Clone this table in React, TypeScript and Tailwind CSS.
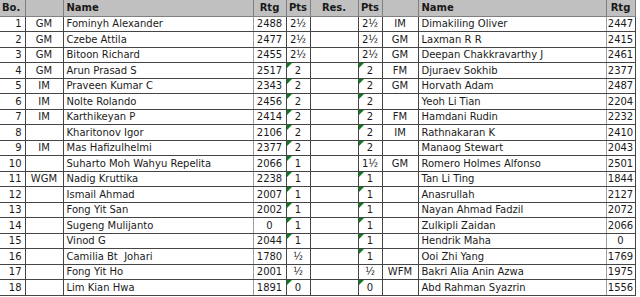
import type { ReactNode } from 'react'

type Row = {
  no: number
  t1: string
  n1: string
  r1: string
  p1: string
  m1: boolean
  p2: string
  m2: boolean
  t2: string
  n2: string
  r2: string
}

const rows: Row[] = [
  { no: 1, t1: 'GM', n1: 'Fominyh Alexander', r1: '2488', p1: '2½', m1: false, p2: '2½', m2: false, t2: 'IM', n2: 'Dimakiling Oliver', r2: '2447' },
  { no: 2, t1: 'GM', n1: 'Czebe Attila', r1: '2477', p1: '2½', m1: false, p2: '2½', m2: false, t2: 'GM', n2: 'Laxman R R', r2: '2415' },
  { no: 3, t1: 'GM', n1: 'Bitoon Richard', r1: '2455', p1: '2½', m1: false, p2: '2½', m2: false, t2: 'GM', n2: 'Deepan Chakkravarthy J', r2: '2461' },
  { no: 4, t1: 'GM', n1: 'Arun Prasad S', r1: '2517', p1: '2', m1: true, p2: '2', m2: true, t2: 'FM', n2: 'Djuraev Sokhib', r2: '2377' },
  { no: 5, t1: 'IM', n1: 'Praveen Kumar C', r1: '2343', p1: '2', m1: true, p2: '2', m2: true, t2: 'GM', n2: 'Horvath Adam', r2: '2487' },
  { no: 6, t1: 'IM', n1: 'Nolte Rolando', r1: '2456', p1: '2', m1: true, p2: '2', m2: true, t2: '', n2: 'Yeoh Li Tian', r2: '2204' },
  { no: 7, t1: 'IM', n1: 'Karthikeyan P', r1: '2414', p1: '2', m1: true, p2: '2', m2: true, t2: 'FM', n2: 'Hamdani Rudin', r2: '2232' },
  { no: 8, t1: '', n1: 'Kharitonov Igor', r1: '2106', p1: '2', m1: true, p2: '2', m2: true, t2: 'IM', n2: 'Rathnakaran K', r2: '2410' },
  { no: 9, t1: 'IM', n1: 'Mas Hafizulhelmi', r1: '2377', p1: '2', m1: true, p2: '2', m2: true, t2: '', n2: 'Manaog Stewart', r2: '2043' },
  { no: 10, t1: '', n1: 'Suharto Moh Wahyu Repelita', r1: '2066', p1: '1', m1: true, p2: '1½', m2: false, t2: 'GM', n2: 'Romero Holmes Alfonso', r2: '2501' },
  { no: 11, t1: 'WGM', n1: 'Nadig Kruttika', r1: '2238', p1: '1', m1: true, p2: '1', m2: true, t2: '', n2: 'Tan Li Ting', r2: '1844' },
  { no: 12, t1: '', n1: 'Ismail Ahmad', r1: '2007', p1: '1', m1: true, p2: '1', m2: true, t2: '', n2: 'Anasrullah', r2: '2127' },
  { no: 13, t1: '', n1: 'Fong Yit San', r1: '2002', p1: '1', m1: true, p2: '1', m2: true, t2: '', n2: 'Nayan Ahmad Fadzil', r2: '2072' },
  { no: 14, t1: '', n1: 'Sugeng Mulijanto', r1: '0', p1: '1', m1: true, p2: '1', m2: true, t2: '', n2: 'Zulkipli Zaidan', r2: '2066' },
  { no: 15, t1: '', n1: 'Vinod G', r1: '2044', p1: '1', m1: true, p2: '1', m2: true, t2: '', n2: 'Hendrik Maha', r2: '0' },
  { no: 16, t1: '', n1: 'Camilia Bt  Johari', r1: '1780', p1: '½', m1: false, p2: '1', m2: true, t2: '', n2: 'Ooi Zhi Yang', r2: '1769' },
  { no: 17, t1: '', n1: 'Fong Yit Ho', r1: '2001', p1: '½', m1: false, p2: '½', m2: false, t2: 'WFM', n2: 'Bakri Alia Anin Azwa', r2: '1975' },
  { no: 18, t1: '', n1: 'Lim Kian Hwa', r1: '1891', p1: '0', m1: true, p2: '0', m2: true, t2: '', n2: 'Abd Rahman Syazrin', r2: '1556' },
]

// excel's little green "number stored as text" flag
function Flag() {
  return (
    <span className="absolute left-0 top-0 h-0 w-0 border-r-[5px] border-t-[5px] border-r-transparent border-t-[#0a7d1c]" />
  )
}

function Td({ className = '', children }: { className?: string; children?: ReactNode }) {
  return (
    <td className={`relative h-[15.5px] whitespace-pre border-b border-l border-[#454545] p-0 pt-[1px] leading-none ${className}`}>
      {children}
    </td>
  )
}

export default function App() {
  const th = 'h-4 border-b border-l border-[#808080] p-0 pt-[1px] font-bold leading-none'
  return (
    <div className="h-[297px] w-[640px] overflow-hidden bg-white">
      <table
        className="w-[635px] table-fixed border-collapse text-[10px] text-[#1a1a1a]"
        style={{ fontFamily: '"DejaVu Sans", Verdana, sans-serif' }}
      >
        <colgroup>
          <col className="w-[25px]" />
          <col className="w-[38px]" />
          <col className="w-[190px]" />
          <col className="w-[33px]" />
          <col className="w-[24px]" />
          <col className="w-[48px]" />
          <col className="w-[24px]" />
          <col className="w-[36px]" />
          <col className="w-[188px]" />
          <col className="w-[29px]" />
        </colgroup>
        <thead>
          <tr className="bg-[#c0c0c0]">
            <th className={`${th} border-l-0 pl-[2px] text-left`}>Bo.</th>
            <th className={th} />
            <th className={`${th} pl-[3px] text-left`}>Name</th>
            <th className={`${th} text-center`}>Rtg</th>
            <th className={`${th} text-center`}>Pts</th>
            <th className={`${th} text-center`}>Res.</th>
            <th className={`${th} text-center`}>Pts</th>
            <th className={th} />
            <th className={`${th} pl-[3px] text-left`}>Name</th>
            <th className={`${th} border-r text-center`}>Rtg</th>
          </tr>
        </thead>
        <tbody>
          {rows.map((r) => (
            <tr key={r.no}>
              <Td className="border-l-0 pr-[3px] text-right">{r.no}</Td>
              <Td className="text-center">{r.t1}</Td>
              <Td className="pl-[3px] text-left">{r.n1}</Td>
              <Td className="border-l-[#a0a0a0] text-center">{r.r1}</Td>
              <Td className="text-center">
                {r.m1 && <Flag />}
                {r.p1}
              </Td>
              <Td />
              <Td className="text-center">
                {r.m2 && <Flag />}
                {r.p2}
              </Td>
              <Td className="text-center">{r.t2}</Td>
              <Td className="pl-[3px] text-left">{r.n2}</Td>
              <Td className="border-l-[#a0a0a0] border-r text-center">{r.r2}</Td>
            </tr>
          ))}
        </tbody>
      </table>
    </div>
  )
}
